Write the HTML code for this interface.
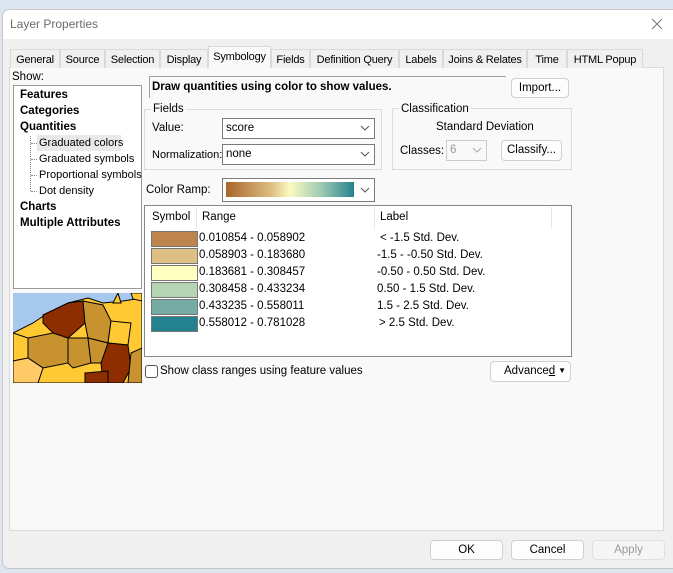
<!DOCTYPE html>
<html><head><meta charset="utf-8"><style>
*{box-sizing:border-box;margin:0;padding:0}
body{width:673px;height:573px;overflow:hidden;background:#dde6f0;font-family:"Liberation Sans",sans-serif;font-size:11.5px;line-height:17px;color:#000;position:relative}
.a{position:absolute;white-space:nowrap}
.btn{position:absolute;background:#fdfdfd;border:1px solid #d0d0d0;border-radius:4px;text-align:center;line-height:18px;white-space:nowrap}
.cb{position:absolute;background:#fff;border:1px solid #7a7a7a;padding-left:3px;line-height:19px}
.chev{position:absolute;right:4px;top:6px;width:10px;height:6px}
.tab{position:absolute;top:49px;height:19px;border:1px solid #d9d9d9;border-bottom:none;background:#f0f0f0;text-align:center;line-height:18px;font-size:11px;white-space:nowrap;overflow:hidden;letter-spacing:-0.2px}
.grp{position:absolute;border:1px solid #dcdcdc}
.sw{position:absolute;left:151px;width:47px;height:16px;border:1px solid #777}
.b{font-weight:bold}
</style></head><body>
<div class="a" style="left:2px;top:9px;width:680px;height:560px;background:#f0f0f0;border:1px solid #c8c8c8;border-radius:7px"></div>
<div class="a" style="left:3px;top:10px;width:678px;height:29px;background:#fff;border-radius:7px 0 0 0"></div>
<div class="a" style="left:10px;top:16px;color:#6b6b6b;font-size:12px">Layer Properties</div>
<svg class="a" style="left:651px;top:18px" width="12" height="12"><path d="M1 1L11 11M11 1L1 11" stroke="#777" stroke-width="1"/></svg>

<div class="a" style="left:9px;top:67px;width:655px;height:464px;background:#f9f9f9;border:1px solid #d9d9d9"></div>
<div class="tab" style="left:10px;width:50px;line-height:20px">General</div>
<div class="tab" style="left:60px;width:45px;line-height:20px">Source</div>
<div class="tab" style="left:105px;width:55px;line-height:20px">Selection</div>
<div class="tab" style="left:160px;width:48px;line-height:20px">Display</div>
<div class="tab" style="left:208px;top:46px;height:22px;width:63px;background:#f9f9f9;line-height:21px">Symbology</div>
<div class="tab" style="left:271px;width:39px;line-height:20px">Fields</div>
<div class="tab" style="left:310px;width:89px;line-height:20px">Definition Query</div>
<div class="tab" style="left:399px;width:44px;line-height:20px">Labels</div>
<div class="tab" style="left:443px;width:84px;line-height:20px">Joins &amp; Relates</div>
<div class="tab" style="left:527px;width:40px;line-height:20px">Time</div>
<div class="tab" style="left:567px;width:76px;line-height:20px">HTML Popup</div>

<div class="a" style="left:12px;top:69px">Show:</div>
<div class="a" style="left:13px;top:85px;width:129px;height:204px;background:#fff;border:1px solid #999"></div>
<div class="a b" style="left:20px;top:87px">Features</div>
<div class="a b" style="left:20px;top:103px">Categories</div>
<div class="a b" style="left:20px;top:119px">Quantities</div>
<div class="a" style="left:37px;top:135px;width:84px;height:16px;background:#e8e8e8"></div>
<div class="a" style="left:30px;top:136px;width:1px;height:55px;border-left:1px dotted #888"></div>
<div class="a" style="left:31px;top:143px;width:6px;border-top:1px dotted #888"></div>
<div class="a" style="left:31px;top:159px;width:6px;border-top:1px dotted #888"></div>
<div class="a" style="left:31px;top:175px;width:6px;border-top:1px dotted #888"></div>
<div class="a" style="left:31px;top:191px;width:6px;border-top:1px dotted #888"></div>
<div class="a" style="left:39px;top:135px;font-size:11px">Graduated colors</div>
<div class="a" style="left:39px;top:151px;font-size:11px">Graduated symbols</div>
<div class="a" style="left:39px;top:167px;font-size:11px">Proportional symbols</div>
<div class="a" style="left:39px;top:183px;font-size:11px">Dot density</div>
<div class="a b" style="left:20px;top:199px">Charts</div>
<div class="a b" style="left:20px;top:215px">Multiple Attributes</div>

<svg class="a" style="left:13px;top:293px" width="129" height="90" viewBox="0 0 129 90">
<rect width="129" height="90" fill="#a6c8ee"/>
<g stroke="#000" stroke-width="1">
<path d="M0 40 L20 30 L35 20 L55 10 L75 5 L90 10 L110 8 L129 5 L129 90 L0 90Z" fill="#ffc933"/>
<path d="M30 22 L55 10 L70 8 L72 30 L55 45 L40 40 L30 30Z" fill="#8c2e00"/>
<path d="M72 30 L70 8 L90 12 L98 28 L95 50 L75 45Z" fill="#c8932f"/>
<path d="M98 28 L95 50 L115 52 L118 30 Z" fill="#ffc933"/>
<path d="M95 50 L115 52 L118 75 L110 90 L90 90 L88 70Z" fill="#8c2e00"/>
<path d="M15 45 L40 40 L55 45 L55 70 L30 75 L15 65Z" fill="#c8932f"/>
<path d="M55 45 L75 45 L78 70 L60 75 L55 70Z" fill="#c8932f"/>
<path d="M75 45 L95 50 L88 70 L78 70Z" fill="#c8932f"/>
<path d="M0 40 L15 45 L15 65 L0 68Z" fill="#ffc933"/>
<path d="M118 60 L129 55 L129 90 L115 90Z" fill="#c8932f"/>
<path d="M72 80 L95 78 L95 90 L72 90Z" fill="#8c2e00"/>
<path d="M0 68 L15 65 L30 75 L25 90 L0 90Z" fill="#ffc966"/>
<path d="M100 10 L105 0 L108 10Z M118 0 L129 0 L129 8 L120 6Z" fill="#ffc933"/>
</g></svg>

<div class="a" style="left:149px;top:76px;width:357px;height:22px;border-top:1px solid #a0a0a0;border-left:1px solid #a0a0a0;background:#f9f9f9"></div>
<div class="a b" style="left:152px;top:79px">Draw quantities using color to show values.</div>
<div class="btn" style="left:511px;top:78px;width:58px;height:20px">Import...</div>

<div class="grp" style="left:144px;top:109px;width:238px;height:61px"></div>
<div class="a" style="left:151px;top:101px;background:#f9f9f9;padding:0 2px">Fields</div>
<div class="a" style="left:152px;top:120px">Value:</div>
<div class="cb" style="left:222px;top:118px;width:153px;height:21px">score<svg class="chev"><path d="M1 1L5 5L9 1" fill="none" stroke="#555"/></svg></div>
<div class="a" style="left:152px;top:147px;font-size:11px">Normalization:</div>
<div class="cb" style="left:222px;top:144px;width:153px;height:21px">none<svg class="chev"><path d="M1 1L5 5L9 1" fill="none" stroke="#555"/></svg></div>

<div class="grp" style="left:392px;top:108px;width:180px;height:62px"></div>
<div class="a" style="left:399px;top:101px;background:#f9f9f9;padding:0 2px">Classification</div>
<div class="a" style="left:436px;top:119px">Standard Deviation</div>
<div class="a" style="left:400px;top:143px">Classes:</div>
<div class="cb" style="left:446px;top:140px;width:41px;height:21px;border-color:#ccc;color:#999;background:#f9f9f9">6<svg class="chev"><path d="M1 1L5 5L9 1" fill="none" stroke="#aaa"/></svg></div>
<div class="btn" style="left:501px;top:140px;width:61px;height:21px">Classify...</div>

<div class="a" style="left:146px;top:182px">Color Ramp:</div>
<div class="cb" style="left:222px;top:178px;width:153px;height:24px"><svg class="chev" style="top:8px"><path d="M1 1L5 5L9 1" fill="none" stroke="#555"/></svg></div>
<div class="a" style="left:226px;top:182px;width:128px;height:15px;background:linear-gradient(to right,#a8652a,#dcbd80 35%,#fbfbc0 50%,#9cc8b2 75%,#23838e)"></div>

<div class="a" style="left:144px;top:205px;width:428px;height:152px;background:#fff;border:1px solid #828790"></div>
<div class="a" style="left:196px;top:207px;height:22px;border-left:1px solid #e5e5e5"></div>
<div class="a" style="left:374px;top:207px;height:22px;border-left:1px solid #e5e5e5"></div>
<div class="a" style="left:551px;top:207px;height:22px;border-left:1px solid #e5e5e5"></div>
<div class="a" style="left:152px;top:209px">Symbol</div>
<div class="a" style="left:202px;top:209px">Range</div>
<div class="a" style="left:380px;top:209px">Label</div>
<div class="sw" style="top:231px;background:#bd854b"></div>
<div class="sw" style="top:248px;background:#dfc084"></div>
<div class="sw" style="top:265px;background:#ffffc0"></div>
<div class="sw" style="top:282px;background:#b5d4b4"></div>
<div class="sw" style="top:299px;background:#74aca3"></div>
<div class="sw" style="top:316px;background:#24828f"></div>
<div class="a" style="left:199px;top:230px">0.010854 - 0.058902</div>
<div class="a" style="left:199px;top:247px">0.058903 - 0.183680</div>
<div class="a" style="left:199px;top:264px">0.183681 - 0.308457</div>
<div class="a" style="left:199px;top:281px">0.308458 - 0.433234</div>
<div class="a" style="left:199px;top:298px">0.433235 - 0.558011</div>
<div class="a" style="left:199px;top:315px">0.558012 - 0.781028</div>
<div class="a" style="left:380px;top:230px">&lt; -1.5 Std. Dev.</div>
<div class="a" style="left:377px;top:247px">-1.5 - -0.50 Std. Dev.</div>
<div class="a" style="left:377px;top:264px">-0.50 - 0.50 Std. Dev.</div>
<div class="a" style="left:377px;top:281px">0.50 - 1.5 Std. Dev.</div>
<div class="a" style="left:377px;top:298px">1.5 - 2.5 Std. Dev.</div>
<div class="a" style="left:379px;top:315px">&gt; 2.5 Std. Dev.</div>

<div class="a" style="left:145px;top:365px;width:13px;height:13px;border:1px solid #555;border-radius:3px;background:#fff"></div>
<div class="a" style="left:160px;top:363px">Show class ranges using feature values</div>
<div class="btn" style="left:490px;top:361px;width:81px;height:21px;text-align:left;padding-left:13px">Advance<u>d</u><span style="position:absolute;right:4px;top:0;font-size:8px">▼</span></div>

<div class="btn" style="left:430px;top:540px;width:73px;height:20px">OK</div>
<div class="btn" style="left:511px;top:540px;width:73px;height:20px">Cancel</div>
<div class="btn" style="left:592px;top:540px;width:73px;height:20px;color:#999;background:#f5f5f5;border-color:#e0e0e0">Apply</div>
</body></html>
